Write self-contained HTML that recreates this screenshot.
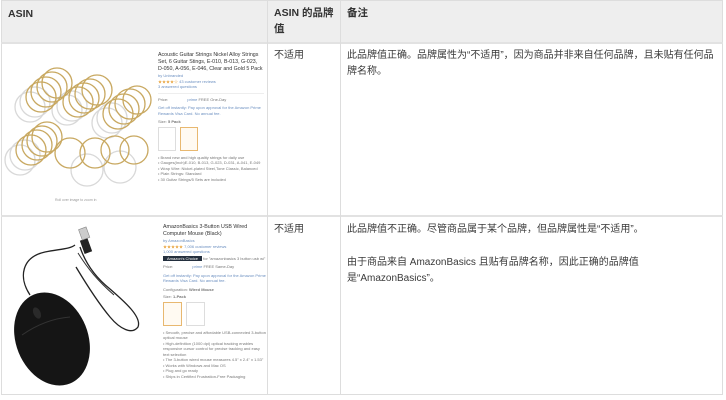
<!DOCTYPE html>
<html><head><meta charset="utf-8"><style>
body{margin:0;width:726px;height:400px;background:#fff;position:relative;overflow:hidden;font-family:"Liberation Sans","Noto Sans CJK SC",sans-serif;color:#333}
.a{position:absolute}
.t{font-size:10px;line-height:16px;color:#3a3a3a}
.h{font-size:10.5px;font-weight:bold;color:#333;line-height:16px}
.s{font-size:4px;line-height:5.5px;color:#777}
.b{color:#6b8fc0}
</style></head><body>
<div class="a" style="left:1px;top:0;width:722px;height:42px;background:#eeeeee"></div>
<div class="a" style="left:1px;top:0;width:722px;height:395px;border:1px solid #ddd;box-sizing:border-box"></div>
<div class="a" style="left:1px;top:42px;width:722px;height:2px;background:#e2e2e2"></div>
<div class="a" style="left:1px;top:215px;width:722px;height:2px;background:#e2e2e2"></div>
<div class="a" style="left:267px;top:0;width:1px;height:395px;background:#ddd"></div>
<div class="a" style="left:340px;top:0;width:1px;height:395px;background:#ddd"></div>

<div class="a h" style="left:8px;top:6px">ASIN</div>
<div class="a h" style="left:274px;top:5px;width:66px">ASIN 的品牌值</div>
<div class="a h" style="left:347px;top:5px">备注</div>

<div class="a t" style="left:274px;top:48px">不适用</div>
<div class="a t" style="left:347px;top:48px;width:370px">此品牌值正确。品牌属性为“不适用”，因为商品并非来自任何品牌，且未贴有任何品牌名称。</div>
<div class="a t" style="left:274px;top:222px">不适用</div>
<div class="a t" style="left:347px;top:222px;width:370px">此品牌值不正确。尽管商品属于某个品牌，但品牌属性是“不适用”。</div>
<div class="a t" style="left:347px;top:255px;width:370px">由于商品来自 AmazonBasics 且贴有品牌名称，因此正确的品牌值是“AmazonBasics”。</div>

<svg class="a" style="left:0;top:44px" width="155" height="170">
<g fill="none" stroke-width="1.3">
<g stroke="#d8d8d8"><circle cx="30" cy="63" r="15"/><circle cx="35" cy="58" r="15"/><circle cx="67" cy="66" r="15"/><circle cx="72" cy="62" r="15"/><circle cx="107" cy="79" r="15"/><circle cx="112" cy="74" r="15"/><circle cx="20" cy="116" r="15"/><circle cx="25" cy="111" r="15"/><circle cx="87" cy="126" r="16"/><circle cx="120" cy="123" r="16"/></g>
<g stroke="#c8a860"><circle cx="41" cy="53" r="15"/><circle cx="46" cy="48" r="15"/><circle cx="52" cy="43" r="15"/><circle cx="57" cy="39" r="15"/><circle cx="78" cy="58" r="15"/><circle cx="84" cy="54" r="15"/><circle cx="90" cy="50" r="15"/><circle cx="97" cy="46" r="15"/><circle cx="118" cy="70" r="15"/><circle cx="124" cy="65" r="15"/><circle cx="130" cy="60" r="15"/><circle cx="137" cy="56" r="14"/><circle cx="31" cy="106" r="15"/><circle cx="37" cy="101" r="15"/><circle cx="42" cy="97" r="15"/><circle cx="47" cy="93" r="15"/><circle cx="70" cy="109" r="15"/><circle cx="95" cy="109" r="15"/><circle cx="115" cy="106" r="14"/><circle cx="134" cy="106" r="14"/></g>
</g>
<text x="55" y="157" font-size="3.5" fill="#999" font-family="Liberation Sans">Roll over image to zoom in</text>
</svg>

<div class="a" style="left:158px;top:52px;width:106px">
<div style="font-size:5.3px;line-height:7px;color:#333">Acoustic Guitar Strings Nickel Alloy Strings Set, 6 Guitar Stings, E-010, B-013, G-023, D-050, A-056, E-046, Clear and Gold 5 Pack</div>
<div class="s b">by Unbranded</div>
<div class="s"><span style="color:#e8a33c">★★★★☆</span> <span class="b">43 customer reviews</span></div>
<div class="s b">3 answered questions</div>
<div class="s" style="border-top:1px solid #eee;margin-top:3px;padding-top:3px">Price: <span class="b" style="margin-left:18px">prime</span> FREE One-Day</div>
<div class="s b" style="margin-top:3px">Get off instantly: Pay upon approval for the Amazon Prime Rewards Visa Card. No annual fee.</div>
<div class="s" style="margin-top:3px">Size: <b>5 Pack</b></div>
<div style="display:flex;gap:4px;margin-top:2px"><div style="width:16px;height:22px;border:1px solid #ddd"></div><div style="width:16px;height:22px;border:1px solid #e8b870;background:#fffaf2"></div></div>
<div class="s" style="margin-top:4px">• Brand new and high quality strings for daily use<br>• Gauges(Inch)E-010, B-013, G-023, D-031, A-041, E-049<br>• Wrap Wire: Nickel-plated Steel,Tone Classic, Balanced<br>• Plain Strings: Standard<br>• 30 Guitar Strings/5 Sets are included</div>
</div>

<svg class="a" style="left:0;top:217px" width="155" height="178">
<path d="M30 78 C18 60 22 40 45 35 C60 32 70 32 75 28" fill="none" stroke="#222" stroke-width="1.3"/>
<path d="M80 30 C85 45 95 60 110 72 C125 85 142 100 138 110 C132 118 120 112 110 100 C100 88 88 70 76 50" fill="none" stroke="#222" stroke-width="1.3"/>
<path d="M78 36 C88 52 98 64 114 78" fill="none" stroke="#333" stroke-width="1"/>
<rect x="82" y="22" width="8" height="14" fill="#222" transform="rotate(-20 86 29)"/>
<rect x="80" y="11" width="8" height="11" fill="#ccc" stroke="#888" stroke-width=".6" transform="rotate(-20 84 16)"/>
<ellipse cx="52" cy="122" rx="36" ry="48" fill="#151515" transform="rotate(-22 52 122)"/>
<path d="M22 118 Q45 102 70 100" stroke="#333" fill="none" stroke-width="1"/>
<ellipse cx="37" cy="96" rx="3.5" ry="6" fill="#2a2a2a" transform="rotate(-25 37 96)"/>
</svg>

<div class="a" style="left:163px;top:224px;width:104px">
<div style="font-size:5.3px;line-height:7px;color:#333">AmazonBasics 3-Button USB Wired Computer Mouse (Black)</div>
<div class="s b">by AmazonBasics</div>
<div class="s"><span style="color:#e8a33c">★★★★★</span> <span class="b">7,006 customer reviews</span></div>
<div class="s b">1,000 answered questions</div>
<div class="s" style="margin-top:1px"><span style="background:#232f3e;color:#fff;padding:0 4px">Amazon's Choice</span> for "amazonbasics 3 button usb wi"</div>
<div class="s" style="margin-top:3px">Price: <span class="b" style="margin-left:18px">prime</span> FREE Same-Day</div>
<div class="s b" style="margin-top:3px">Get off instantly: Pay upon approval for the Amazon Prime Rewards Visa Card. No annual fee.</div>
<div class="s" style="margin-top:3px">Configuration: <b>Wired Mouse</b></div>
<div class="s" style="margin-top:2px">Size: <b>1-Pack</b></div>
<div style="display:flex;gap:4px;margin-top:2px"><div style="width:17px;height:22px;border:1px solid #e8b870;background:#fffaf2"></div><div style="width:17px;height:22px;border:1px solid #ddd"></div></div>
<div class="s" style="margin-top:4px">• Smooth, precise and affordable USB-connected 3-button optical mouse<br>• High-definition (1000 dpi) optical tracking enables responsive cursor control for precise tracking and easy text selection<br>• The 3-button wired mouse measures 4.5" x 2.4" x 1.53"<br>• Works with Windows and Mac OS<br>• Plug and go ready<br>• Ships in Certified Frustration-Free Packaging</div>
</div>
</body></html>
